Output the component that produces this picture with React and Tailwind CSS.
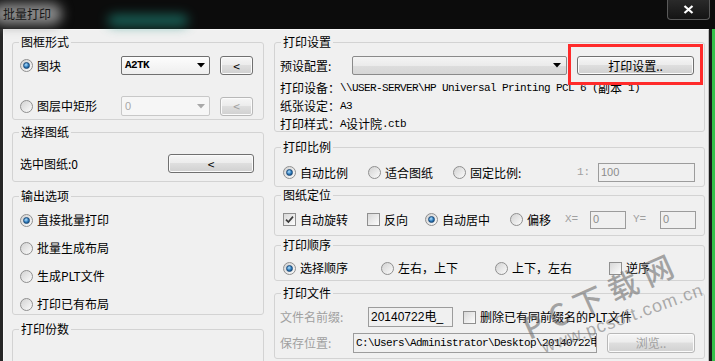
import React from "react";

// 批量打印 dialog (Win7 classic look)

const Radio = ({ on }) => (
	<span className="flex h-[13px] w-[13px] shrink-0 items-center justify-center rounded-full border border-[#8f8f8f] bg-[linear-gradient(135deg,#d2d2d2,#fbfbfb)]">
		{on && (
			<span className="h-[7px] w-[7px] rounded-full border border-[#1c4a78] bg-[radial-gradient(circle_at_40%_35%,#b4e2ff,#2a78ba_55%,#0f3d66)]" />
		)}
	</span>
);

const Check = ({ on }) => (
	<span className="flex h-[13px] w-[13px] shrink-0 items-center justify-center border border-[#8f8f8f] bg-[linear-gradient(135deg,#d8d8d8,#fdfdfd)]">
		{on && (
			<svg width="9" height="9" viewBox="0 0 9 9">
				<path d="M1 4.6 L3.4 7 L8 1.6" stroke="#3a3a3a" strokeWidth="1.7" fill="none" />
			</svg>
		)}
	</span>
);

const Opt = ({ type = "radio", on, label, className = "" }) => (
	<div className={`flex items-center gap-[4px] ${className}`}>
		{type === "radio" ? <Radio on={on} /> : <Check on={on} />}
		<span className="whitespace-nowrap">{label}</span>
	</div>
);

const Btn = ({ children, disabled, className = "" }) => (
	<div
		className={`flex items-center justify-center rounded-[3px] border bg-[linear-gradient(#f6f6f6,#ececec_45%,#dedede_50%,#d0d0d0)] shadow-[inset_0_0_0_1px_#fbfbfb] ${
			disabled ? "border-[#b8b8b8] text-[#a0a0a0]" : "border-[#707070] text-black"
		} ${className}`}
	>
		{children}
	</div>
);

const Arrow = ({ color = "#000" }) => (
	<svg width="8" height="5" viewBox="0 0 8 5" className="shrink-0">
		<path d="M0 0 H8 L4 4.5 Z" fill={color} />
	</svg>
);

const Input = ({ children, className = "" }) => (
	<div className={`flex items-center overflow-hidden whitespace-nowrap border border-[#9c9c9c] px-[2px] ${className}`}>
		{children}
	</div>
);

const Group = ({ title, className = "", children }) => (
	<fieldset className={`shrink-0 rounded-[3px] border border-[#d3d3d3] ${className}`}>
		<legend className="ml-[6px] px-[2px] leading-[14px]">{title}</legend>
		{children}
	</fieldset>
);

const mono = "whitespace-pre font-[Liberation_Mono,Noto_Sans_CJK_SC,monospace] text-[11px] tracking-[-0.6px]";

export default function App() {
	return (
		<div className="relative h-[361px] w-[715px] overflow-hidden bg-[#0c0c0c] font-[Noto_Sans_CJK_SC,sans-serif] text-[12px] text-black">
			{/* title bar */}
			<div className="relative flex h-[29px] items-start">
				<div className="absolute left-[-8px] top-[3px] h-[22px] w-[70px] rounded-full bg-[#8a8a8a] blur-[6px]" />
				<div className="absolute left-[108px] top-[15px] h-[11px] w-[80px] rounded-full bg-[#1f8f80] opacity-70 blur-[6px]" />
				<span className="relative pl-[3px] pt-[6px] leading-[16px] text-[#161616]">批量打印</span>
				<div className="relative ml-auto mr-[5px] flex h-[20px] w-[43px] items-center justify-center rounded-b-[4px] border border-t-0 border-[#5a5a5a] bg-[linear-gradient(#2a2a2a,#141414)]">
					<svg width="11" height="9" viewBox="0 0 11 9">
						<path d="M1.5 1 L9.5 8 M9.5 1 L1.5 8" stroke="#fff" strokeWidth="2.2" />
					</svg>
				</div>
			</div>

			<div className="flex h-[332px]">
				<div className="w-[3px] bg-[#262626]" />
				<div className="flex w-[706px] gap-[10px] border-l border-r border-t border-[#f8f8f8] border-r-[#bdbdbd] bg-[#f0f0f0] pl-[8px] pt-[5px]">
					{/* left column */}
					<div className="flex w-[252px] flex-col">
						<Group title="图框形式" className="h-[85px]">
							<div className="mt-[7px] flex h-[19px] items-center pl-[7px]">
								<Opt on label="图块" className="w-[101px]" />
								<div className="flex h-[19px] w-[89px] items-center justify-between rounded-[2px] border border-[#707070] bg-[linear-gradient(#fdfdfd,#eeeeee)] pl-[3px] pr-[4px]">
									<span className="font-[Liberation_Mono,monospace] text-[11px] font-bold tracking-[-0.6px]">A2TK</span>
									<Arrow />
								</div>
								<Btn className="ml-[10px] h-[19px] w-[33px]">&lt;</Btn>
							</div>
							<div className="mt-[21px] flex h-[20px] items-center pl-[7px]">
								<Opt label="图层中矩形" className="w-[101px]" />
								<div className="flex h-[20px] w-[89px] items-center justify-between rounded-[2px] border border-[#c8c8c8] bg-[#f6f6f6] pl-[3px] pr-[4px] text-[#a8a8a8]">
									<span className="font-[Liberation_Sans,sans-serif] text-[11px]">0</span>
									<Arrow color="#a8a8a8" />
								</div>
								<Btn disabled className="ml-[10px] h-[19px] w-[33px]">&lt;</Btn>
							</div>
						</Group>

						<Group title="选择图纸" className="mt-[5px] h-[57px]">
							<div className="mt-[15px] flex h-[19px] items-center justify-between pl-[7px] pr-[9px]">
								<span>选中图纸:0</span>
								<Btn className="h-[19px] w-[86px]">&lt;</Btn>
							</div>
						</Group>

						<Group title="输出选项" className="mt-[7px] h-[126px]">
							<div className="mt-[7px] flex flex-col gap-[8px] pl-[7px]">
								<Opt on label="直接批量打印" className="h-[20px]" />
								<Opt label="批量生成布局" className="h-[20px]" />
								<Opt label="生成PLT文件" className="h-[20px]" />
								<Opt label="打印已有布局" className="h-[20px]" />
							</div>
						</Group>

						<Group title="打印份数" className="mt-[7px] h-[60px]" />
					</div>

					{/* right column */}
					<div className="relative flex w-[431px] flex-col">
						<Group title="打印设置" className="h-[97px]">
							<div className="mt-[7px] flex h-[19px] items-center pl-[5px]">
								<span className="w-[72px]">预设配置:</span>
								<div className="flex h-[19px] w-[215px] items-center justify-end rounded-[2px] border border-[#8a8a8a] bg-[linear-gradient(#f4f4f4,#ebebeb_50%,#dddddd_50%,#d6d6d6)] pr-[5px]">
									<Arrow />
								</div>
								<Btn className="ml-[10px] h-[19px] w-[117px]">打印设置..</Btn>
							</div>
							<div className="mt-[4px] flex flex-col pl-[5px] leading-[18px]">
								<div className="flex whitespace-nowrap">
									<span>打印设备：</span>
									<span className={mono}>{"\\\\USER-SERVER\\HP Universal Printing PCL 6 ("}</span>
									<span>副本</span>
									<span className={mono}>{" 1)"}</span>
								</div>
								<div className="flex">
									<span>纸张设定：</span>
									<span className={mono}>A3</span>
								</div>
								<div className="flex">
									<span>打印样式：</span>
									<span className={mono}>A</span>
									<span>设计院</span>
									<span className={mono}>.ctb</span>
								</div>
							</div>
						</Group>

						<Group title="打印比例" className="mt-[8px] h-[47px]">
							<div className="mt-[9px] flex h-[19px] items-center pl-[8px]">
								<Opt on label="自动比例" className="w-[85px]" />
								<Opt label="适合图纸" className="w-[85px]" />
								<Opt label="固定比例:" className="w-[124px]" />
								<span className="w-[21px] font-[Liberation_Mono,monospace] text-[11px] text-[#a0a0a0]">1:</span>
								<Input className="h-[19px] w-[97px] font-[Liberation_Sans,sans-serif] text-[11px] text-[#8c8c8c]">100</Input>
							</div>
						</Group>

						<Group title="图纸定位" className="mt-[1px] h-[48px]">
							<div className="mt-[8px] flex h-[19px] items-center pl-[8px]">
								<Opt type="check" on label="自动旋转" className="w-[84px]" />
								<Opt type="check" label="反向" className="w-[58px]" />
								<Opt on label="自动居中" className="w-[85px]" />
								<Opt label="偏移" className="w-[55px]" />
								<span className="w-[25px] font-[Liberation_Mono,monospace] text-[11px] text-[#a0a0a0]">X=</span>
								<Input className="h-[18px] w-[36px] font-[Liberation_Sans,sans-serif] text-[11px] text-[#8c8c8c]">0</Input>
								<span className="ml-[7px] w-[27px] font-[Liberation_Mono,monospace] text-[11px] text-[#a0a0a0]">Y=</span>
								<Input className="h-[18px] w-[36px] font-[Liberation_Sans,sans-serif] text-[11px] text-[#8c8c8c]">0</Input>
							</div>
						</Group>

						<Group title="打印顺序" className="mt-[2px] h-[43px]">
							<div className="mt-[6px] flex h-[20px] items-center pl-[8px]">
								<Opt on label="选择顺序" className="w-[98px]" />
								<Opt label="左右，上下" className="w-[114px]" />
								<Opt label="上下，左右" className="w-[114px]" />
								<Opt type="check" label="逆序" />
							</div>
						</Group>

						<Group title="打印文件" className="mt-[5px] h-[73px]">
							<div className="mt-[7px] flex h-[20px] items-center pl-[5px]">
								<span className="w-[88px] text-[#a0a0a0]">文件名前缀:</span>
								<Input className="h-[20px] w-[85px] font-[Liberation_Sans,Noto_Sans_CJK_SC,sans-serif] text-[12px]">
									20140722电_
								</Input>
								<Opt type="check" label="删除已有同前缀名的PLT文件" className="ml-[10px]" />
							</div>
							<div className="mt-[6px] flex h-[20px] items-center pl-[5px]">
								<span className="w-[73px] text-[#a0a0a0]">保存位置:</span>
								<Input className={`h-[20px] w-[244px] ${mono}`}>
									{"C:\\Users\\Administrator\\Desktop\\20140722电"}
								</Input>
								<Btn disabled className="ml-[10px] h-[20px] w-[88px]">浏览..</Btn>
							</div>
						</Group>

						{/* highlight box */}
						<div className="pointer-events-none absolute left-[294px] top-[9px] h-[41px] w-[135px] border-[3px] border-[#ff2b2b]" />
					</div>
				</div>
				<div className="w-[3px] bg-[#1a1a1a]" />
				<div className="w-[3px] bg-[#35c24a]" />
			</div>

			{/* watermark */}
			<div className="pointer-events-none absolute left-[530px] top-[312px] origin-bottom-left -rotate-[24deg] whitespace-nowrap text-[30px] font-medium leading-[30px] tracking-[8px] text-[#6e6e6e]/60">
				PC下载网
			</div>
			<div className="pointer-events-none absolute left-[545px] top-[338px] origin-bottom-left -rotate-[20deg] whitespace-nowrap font-[Liberation_Sans,sans-serif] text-[18px] leading-[18px] tracking-[1px] text-[#6e6e6e]/55">
				www.pcsoft.com.cn
			</div>
		</div>
	);
}
